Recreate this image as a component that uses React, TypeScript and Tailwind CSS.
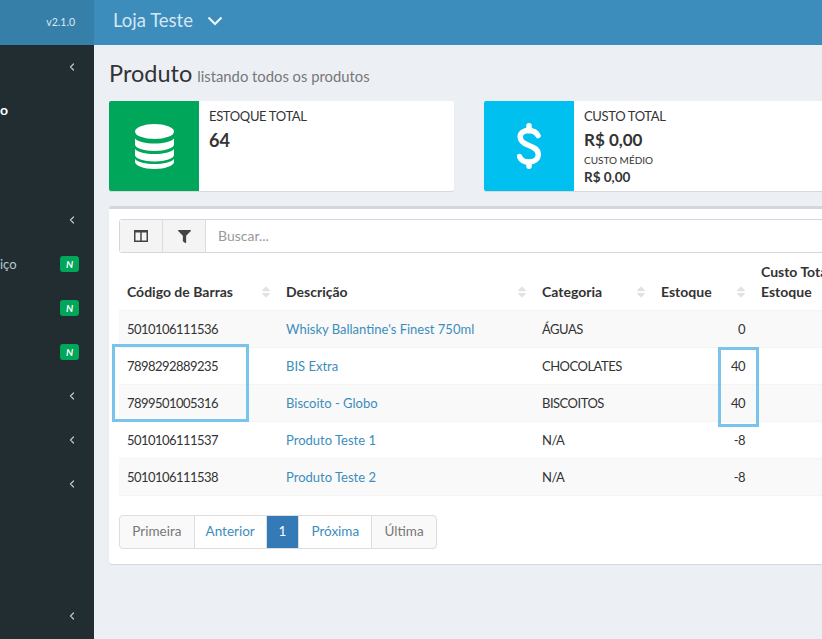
import { ChevronLeft } from "lucide-react";
import { FaFilter, FaSort } from "react-icons/fa";

const rows = [
    { code: "5010106111536", name: "Whisky Ballantine's Finest 750ml", category: "ÁGUAS", stock: "0" },
    { code: "7898292889235", name: "BIS Extra", category: "CHOCOLATES", stock: "40" },
    { code: "7899501005316", name: "Biscoito - Globo", category: "BISCOITOS", stock: "40" },
    { code: "5010106111537", name: "Produto Teste 1", category: "N/A", stock: "-8" },
    { code: "5010106111538", name: "Produto Teste 2", category: "N/A", stock: "-8" },
];

const SideChevron = () => (
    <div className="h-11 flex items-center justify-end pr-[16px] text-[#b8c7ce]">
        <ChevronLeft size={12} strokeWidth={2.5} />
    </div>
);

const SideBadge = ({ label }: { label?: string }) => (
    <div className="h-11 flex items-center justify-between pr-[15px] text-[13px] text-[#b8c7ce]">
        <span className="pt-px">{label}</span>
        <span className="w-[19px] h-4 rounded-[3px] bg-[#00a65a] text-white text-[10px] font-bold italic flex items-center justify-center">N</span>
    </div>
);

const SortHeader = ({ title, width }: { title: string; width: string }) => (
    <th className={`${width} pl-2 pr-[7px] pb-[8px] align-bottom text-left text-[14px] leading-5 font-bold`}>
        <div className="flex items-center justify-between">
            <span>{title}</span>
            <FaSort className="w-[10px] h-[14px] text-[#e2e2e2]" />
        </div>
    </th>
);

const Pager = ({ label, className }: { label: string; className: string }) => (
    <span className={`h-[34px] flex items-center justify-center border border-[#ddd] -ml-px first:ml-0 text-[13.5px] ${className}`}>{label}</span>
);

const DatabaseIcon = () => (
    <svg width="39" height="45" viewBox="0 0 39 45" fill="currentColor">
        <ellipse cx="19.5" cy="7.5" rx="19.5" ry="7.5" />
        <path d="M0 14.5c3 3.500 10.500 5 19.500 5s16.500-1.500 19.500-5v6c0 3.500-8.500 6.500-19.500 6.500S0 24 0 20.500z" />
        <path d="M0 25c3 3.500 10.500 5 19.500 5s16.500-1.500 19.500-5v6c0 3.500-8.500 6.500-19.500 6.500S0 34.500 0 31z" />
        <path d="M0 35c3 3.500 10.500 5 19.500 5s16.500-1.500 19.500-5v3c0 3.500-8.500 7-19.500 7S0 41.500 0 38z" />
    </svg>
);

const DollarIcon = () => (
    <svg width="24" height="46" viewBox="0 0 24 46" fill="none" stroke="currentColor" strokeWidth="5.5" strokeLinecap="round">
        <path d="M12 2.800v5M12 39v4.200" />
        <path d="M21 12.500C19 9 16 7.500 12 7.500 6.500 7.500 3.200 10 3.200 14c0 4.500 3.300 6.500 8.800 8.500 5.500 2 9.300 4 9.300 9 0 4.500-3.800 7.500-9.300 7.500-5 0-8-2-9.500-5.500" />
    </svg>
);

const ColumnsIcon = () => (
    <svg width="14" height="12" viewBox="0 0 14 12" fill="none" stroke="currentColor">
        <rect x="0.750" y="0.750" width="12.500" height="10.500" strokeWidth="1.500" />
        <path d="M7 1v10" strokeWidth="1.500" />
        <path d="M1 1.500h12" strokeWidth="2" />
    </svg>
);

export default function App() {
    return (
        <div className="w-[822px] h-[639px] overflow-hidden flex bg-[#ecf0f5] text-[#333] font-['Lato','Liberation_Sans',sans-serif]">
            <aside className="w-[94px] shrink-0 bg-[#222d32] flex flex-col">
                <div className="h-[45px] bg-[#367fa9] text-[#dbe9f2] text-[10.500px] flex items-center justify-end pr-[19px]">v2.1.0</div>
                <SideChevron />
                <div className="h-11 flex items-center pb-[3px] text-[14px] font-bold text-white">o</div>
                <div className="h-[65px]" />
                <SideChevron />
                <SideBadge label="iço" />
                <SideBadge />
                <SideBadge />
                <SideChevron />
                <SideChevron />
                <SideChevron />
                <div className="mt-auto mb-px">
                    <SideChevron />
                </div>
            </aside>

            <div className="flex-1 min-w-0 flex flex-col">
                <header className="h-[45px] shrink-0 bg-[#3c8dbc] flex items-center pl-[19px] pb-[3px] gap-[14px] text-[#d5e6f1] text-[18.500px]">
                    <span>Loja Teste</span>
                    <svg width="16" height="10" viewBox="0 0 16 10" fill="none" stroke="#eef5fa" strokeWidth="2.200">
                        <path d="M1.500 1.500 8 8l6.500-6.500" />
                    </svg>
                </header>

                <main className="w-[900px] pl-[15px] pt-[13px]">
                    <h1 className="h-[43px] flex items-baseline gap-[5px] text-[23.500px] leading-[30px] font-normal">
                        <span>Produto</span>
                        <span className="text-[14.800px] text-[#777]">listando todos os produtos</span>
                    </h1>

                    <div className="flex gap-[30px]">
                        <div className="w-[345px] h-[90px] bg-white rounded-[2px] shadow-[0_1px_1px_rgba(0,0,0,0.1)] flex overflow-hidden">
                            <div className="w-[90px] bg-[#00a65a] flex items-center justify-center text-white">
                                <DatabaseIcon />
                            </div>
                            <div className="px-[10px] py-[5px]">
                                <div className="text-[13px] tracking-[-0.35px] leading-5">ESTOQUE TOTAL</div>
                                <div className="text-[18px] leading-[28px] font-bold">64</div>
                            </div>
                        </div>
                        <div className="w-[345px] h-[90px] bg-white rounded-[2px] shadow-[0_1px_1px_rgba(0,0,0,0.1)] flex overflow-hidden">
                            <div className="w-[90px] bg-[#00c0ef] flex items-center justify-center text-white">
                                <DollarIcon />
                            </div>
                            <div className="px-[10px] py-[5px]">
                                <div className="text-[13px] tracking-[-0.35px] leading-5">CUSTO TOTAL</div>
                                <div className="text-[17px] leading-[28px] font-bold">R$ 0,00</div>
                                <div className="text-[10px] leading-[12px]">CUSTO MÉDIO</div>
                                <div className="text-[13.500px] leading-[22px] font-bold">R$ 0,00</div>
                            </div>
                        </div>
                    </div>

                    <section className="relative mt-[15px] h-[358px] bg-white border-t-[3px] border-[#d2d6de] rounded-[3px] shadow-[0_1px_1px_rgba(0,0,0,0.1)] pt-[10px] pl-[10px]">
                        <div className="h-[34px] flex border border-[#d2d6de] rounded-[3px]">
                            <div className="w-[43px] bg-[#f4f4f4] border-r border-[#ddd] flex items-center justify-center text-[#444]">
                                <ColumnsIcon />
                            </div>
                            <div className="w-[43px] bg-[#f4f4f4] border-r border-[#ddd] flex items-center justify-center text-[#444]">
                                <FaFilter className="w-[13px] h-[13px]" />
                            </div>
                            <div className="flex-1 pl-3 pb-px flex items-center text-[14px] text-[#999]">Buscar...</div>
                        </div>

                        <table className="table-fixed w-[780px] mt-2 border-collapse">
                            <thead>
                                <tr className="h-[49px] border-b border-[#f4f4f4]">
                                    <SortHeader title="Código de Barras" width="w-[159px]" />
                                    <SortHeader title="Descrição" width="w-[256px]" />
                                    <SortHeader title="Categoria" width="w-[119px]" />
                                    <SortHeader title="Estoque" width="w-[100px]" />
                                    <th className="px-2 pb-[8px] align-bottom text-left text-[14px] leading-5 font-bold whitespace-nowrap">
                                        Custo Total
                                        <br />
                                        Estoque
                                    </th>
                                </tr>
                            </thead>
                            <tbody className="text-[13px]">
                                {rows.map((row, index) => (
                                    <tr key={row.code} className={`h-[37px] border-b border-[#f4f4f4] ${index % 2 === 0 ? "bg-[#f9f9f9]" : "bg-white"}`}>
                                        <td className="px-2 pt-[2px] tracking-[-0.55px]">{row.code}</td>
                                        <td className="px-2 pt-[2px] text-[#3c8dbc]">{row.name}</td>
                                        <td className="px-2 pt-[2px] tracking-[-0.5px]">{row.category}</td>
                                        <td className="px-2 pt-[2px] text-right tracking-[-0.5px]">{row.stock}</td>
                                        <td />
                                    </tr>
                                ))}
                            </tbody>
                        </table>

                        <div className="mt-[19px] flex w-[318px]">
                            <Pager label="Primeira" className="w-[76px] bg-[#f9f9f9] text-[#777] rounded-l-[4px]" />
                            <Pager label="Anterior" className="w-[73px] bg-white text-[#3c8dbc]" />
                            <Pager label="1" className="w-[34px] bg-[#337ab7] border-[#337ab7] text-white" />
                            <Pager label="Próxima" className="w-[74px] bg-white text-[#3c8dbc]" />
                            <Pager label="Última" className="w-[66px] bg-[#f9f9f9] text-[#777] rounded-r-[4px]" />
                        </div>

                        {/* highlight boxes drawn over the table */}
                        <div className="absolute left-[3px] top-[135px] w-[137px] h-[78px] border-[3px] border-[#7ac3ea]" />
                        <div className="absolute left-[609px] top-[138px] w-[41px] h-[80px] border-[3px] border-[#7ac3ea]" />
                    </section>
                </main>
            </div>
        </div>
    );
}
